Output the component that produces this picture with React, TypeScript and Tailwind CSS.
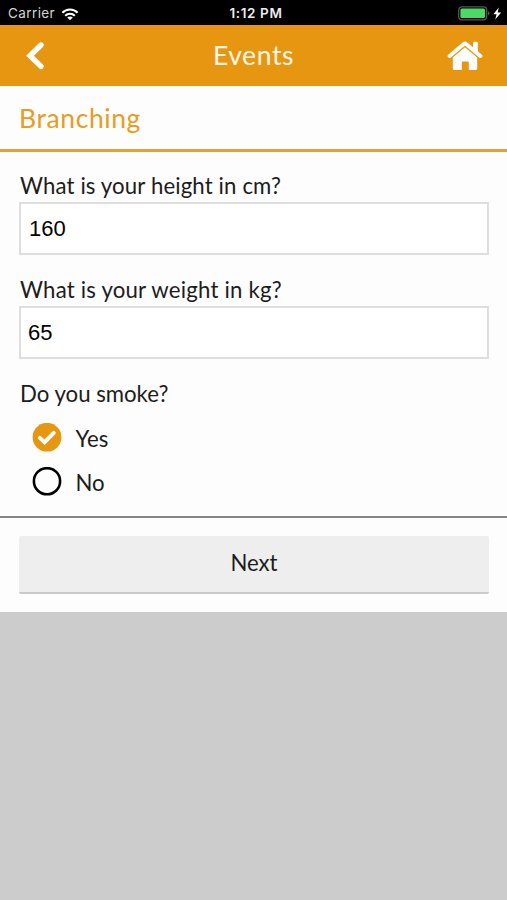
import React, { useState } from 'react';

interface TextFieldProps {
  id: string;
  label: string;
  value: string;
  onChange: (value: string) => void;
  labelClass: string;
  inputClass: string;
}

const StatusBar: React.FC = () => (
  <div className="grid h-[25px] grid-cols-3 items-center bg-black pt-[3px] font-['Inter',sans-serif] leading-none text-white">
    <div className="flex items-center gap-[6px] pl-[8px] text-[13.5px]">
      <span className="tracking-[0.4px] text-[#d4d4d4]">Carrier</span>
      <svg className="h-[13px] w-[18px]" viewBox="0 0 17 13" fill="none" stroke="white" strokeWidth="2.1">
        <path d="M0.9 4.8C5 0.4 12 0.4 16.1 4.8" />
        <path d="M3.7 7.7C6.4 5 10.6 5 13.3 7.7" />
        <path d="M8.5 12.3L5.7 9.5C7.3 8 9.7 8 11.3 9.5Z" fill="white" stroke="none" />
      </svg>
    </div>
    <span className="pl-[5px] text-center text-[13.5px] font-semibold tracking-[0.6px] whitespace-nowrap text-[#ececec]">1:12 PM</span>
    <div className="flex items-center justify-end pr-[5px] pb-[2px]">
      <svg className="h-[15px] w-[44px]" viewBox="0 0 44 15">
        <rect x="0.7" y="0.8" width="28" height="13" rx="3" fill="none" stroke="#55555a" strokeWidth="1.3" />
        <rect x="2.4" y="2.5" width="24.6" height="9.6" rx="1.5" fill="#4cd964" />
        <path d="M30 5.2C32 5.8 32 8.8 30 9.4Z" fill="#55555a" />
        <path d="M40.8 1.6L35.4 8.2H38.6L37.2 13.6L43.2 6.4H39.7Z" fill="white" />
      </svg>
    </div>
  </div>
);

const HomeIcon: React.FC = () => (
  <svg className="h-[30px] w-[36px]" viewBox="0 0 36 30" fill="white">
    <path d="M26 2Q26 0.8 27.2 0.8H29.6Q30.8 0.8 30.8 2V12L26 8Z" />
    <path d="M2.6 15L16.6 3.2Q18 2 19.4 3.2L33.4 15" fill="none" stroke="white" strokeWidth="3.9" strokeLinecap="round" strokeLinejoin="round" />
    <path d="M18 6.3L30.2 16.6V27.6Q30.2 29.1 28.7 29.1H21.8V21.4Q21.8 20.4 20.8 20.4H15.8Q14.8 20.4 14.8 21.4V29.1H7.3Q5.8 29.1 5.8 27.6V16.6Z" />
  </svg>
);

const TextField: React.FC<TextFieldProps> = ({ id, label, value, onChange, labelClass, inputClass }) => (
  <div className="mb-[18px]">
    <label htmlFor={id} className={`block h-[33px] pl-px text-[22.2px] leading-[33px] whitespace-nowrap ${labelClass}`}>
      {label}
    </label>
    <input
      id={id}
      type="text"
      value={value}
      onChange={(e) => onChange(e.target.value)}
      className={`block h-[53px] w-[470px] border-2 border-[#dedede] bg-white font-['Liberation_Sans',sans-serif] text-[22px] text-black outline-none ${inputClass}`}
    />
  </div>
);

const RadioMark: React.FC<{ checked: boolean }> = ({ checked }) => (
  <svg className="h-[30px] w-[30px]" viewBox="0 0 30 30" fill="none">
    {checked ? (
      <>
        <circle cx="15" cy="14.2" r="14.4" fill="#e79611" />
        <path d="M7.9 14.9L12.6 19.2L21.8 9.8" stroke="white" strokeWidth="3.9" strokeLinecap="round" />
      </>
    ) : (
      <circle cx="15" cy="14.2" r="13.1" stroke="black" strokeWidth="2.6" />
    )}
  </svg>
);

const App: React.FC = () => {
  const [height, setHeight] = useState('160');
  const [weight, setWeight] = useState('65');
  const [smokes, setSmokes] = useState('Yes');

  return (
    <div className="min-h-screen bg-[#cccccc] font-['Lato',sans-serif] text-[#1c1c1c]">
      <StatusBar />

      <header className="grid h-[61px] grid-cols-3 items-center bg-[#e79611] text-white">
        <button aria-label="Back" className="w-fit pl-[25px]">
          <svg className="h-[30px] w-[20px]" viewBox="0 0 20 30" fill="none">
            <path d="M16 4L5 14.7L16 25.4" stroke="white" strokeWidth="5.4" strokeLinecap="round" />
          </svg>
        </button>
        <h1 className="text-center text-[26.5px] leading-none tracking-[0.6px] text-[#fff6e6]">Events</h1>
        <button aria-label="Home" className="flex justify-end pr-[24px]">
          <HomeIcon />
        </button>
      </header>

      <main className="bg-[#fdfdfd]">
        <h2 className="h-[66px] border-b-[3px] border-[#e5a03a] pl-[19px] text-[26.5px] leading-[64px] tracking-[0.6px] text-[#e79c22]">
          Branching
        </h2>

        <form className="px-[19px] pt-[17px]" onSubmit={(e) => e.preventDefault()}>
          <TextField
            id="height"
            label="What is your height in cm?"
            value={height}
            onChange={setHeight}
            labelClass="tracking-[0.13px]"
            inputClass="pl-[8px]"
          />
          <TextField
            id="weight"
            label="What is your weight in kg?"
            value={weight}
            onChange={setWeight}
            labelClass="tracking-[0.2px]"
            inputClass="pl-[7px]"
          />

          <p className="h-[33px] pl-px text-[22.2px] leading-[33px]">Do you smoke?</p>
          <div className="mt-[6px] pl-[13px]">
            {['Yes', 'No'].map((option) => (
              <button
                key={option}
                type="button"
                role="radio"
                aria-checked={smokes === option}
                onClick={() => setSmokes(option)}
                className="flex h-[44px] items-center gap-[13.5px] text-[22.2px]"
              >
                <RadioMark checked={smokes === option} />
                <span className="pt-px">{option}</span>
              </button>
            ))}
          </div>
        </form>

        <div className="mt-[12px] border-t-2 border-[#858585] px-[19px] pt-[18px] pb-[18px]">
          <button className="h-[58px] w-[470px] rounded-[2px] border-b-2 border-[#cacaca] bg-[#eeeeee] pb-[2px] text-[22.2px]">
            Next
          </button>
        </div>
      </main>
    </div>
  );
};

export default App;
